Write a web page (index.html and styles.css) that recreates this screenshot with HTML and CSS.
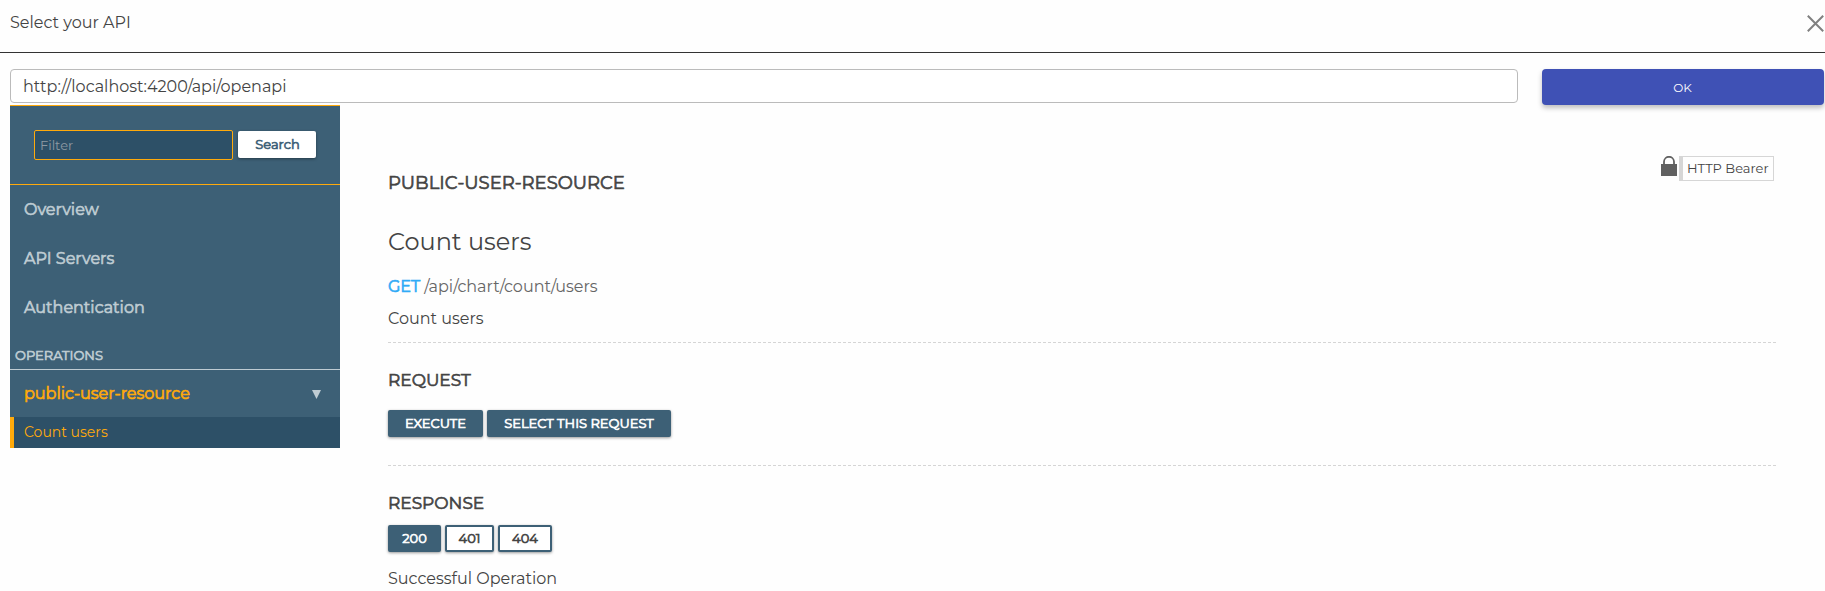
FILE: index.html
```html
<!DOCTYPE html>
<html lang="en">
<head>
<meta charset="utf-8">
<title>Select your API</title>
<link rel="stylesheet" href="styles.css">
</head>
<body>
<header class="dialog-header">
  <span class="t dialog-title">Select your API</span>
  <svg class="close" viewBox="0 0 17 17"><path d="M.8.8l15.4 15.4M16.2.8L.8 16.2"/></svg>
</header>
<div class="url-row">
  <div class="url-input"><span class="t url-text">http://localhost:4200/api/openapi</span></div>
  <button class="ok"><span class="t ok-text">OK</span></button>
</div>
<div class="body">
  <nav class="sidebar">
    <div class="search-row">
      <div class="filter"><span class="t filter-text">Filter</span></div>
      <button class="search"><span class="t strong">Search</span></button>
    </div>
    <div class="nav-item"><span class="t strong">Overview</span></div>
    <div class="nav-item"><span class="t strong">API Servers</span></div>
    <div class="nav-item"><span class="t strong">Authentication</span></div>
    <div class="nav-section"><span class="t strong">OPERATIONS</span></div>
    <div class="nav-group"><span class="t strong">public-user-resource</span><svg class="arrow" viewBox="0 0 9 9"><path d="M0 0h9L4.5 9z"/></svg></div>
    <div class="nav-sub"><span class="t sub-text">Count users</span></div>
  </nav>
  <main class="main">
    <div class="top">
      <h3 class="resource"><span class="t strong">PUBLIC-USER-RESOURCE</span></h3>
      <div class="auth">
        <svg class="lock" viewBox="0 0 16 20"><path class="shackle" d="M3 9V5.8a5 5 0 0 1 10 0V9"/><path d="M0 8h16v12H0z"/></svg>
        <div class="bearer"><span class="t bearer-text">HTTP Bearer</span></div>
      </div>
    </div>
    <h2 class="operation"><span class="t operation-text">Count users</span></h2>
    <div class="endpoint"><span class="t method strong">GET</span><span class="t path">/api/chart/count/users</span></div>
    <div class="summary"><span class="t summary-text">Count users</span></div>
    <section class="request">
      <h4 class="heading"><span class="t strong">REQUEST</span></h4>
      <div class="buttons">
        <button class="btn execute"><span class="t strong">EXECUTE</span></button>
        <button class="btn select"><span class="t strong">SELECT THIS REQUEST</span></button>
      </div>
    </section>
    <section class="response">
      <h4 class="heading"><span class="t strong">RESPONSE</span></h4>
      <div class="buttons codes">
        <button class="btn c200"><span class="t strong">200</span></button>
        <button class="btn outline c401"><span class="t strong">401</span></button>
        <button class="btn outline c404"><span class="t strong">404</span></button>
      </div>
      <div class="result"><span class="t result-text">Successful Operation</span></div>
    </section>
  </main>
</div>
</body>
</html>
```
FILE: styles.css
```css
* { box-sizing: border-box; }
body { margin: 0; height: 591px; overflow: hidden; background: #fefefe; color: #444; font: 400 16px/20px Montserrat, Inter, "Open Sans", sans-serif; }
h2, h3, h4 { margin: 0; font: inherit; }
button { font: inherit; border: 0; padding: 0; margin: 0; color: inherit; }
svg { display: block; flex: none; }
.t { white-space: nowrap; }
.strong { -webkit-text-stroke: .65px currentColor; }

.dialog-header { display: flex; justify-content: space-between; align-items: flex-start; height: 53px; padding: 13px 1px 0 10px; border-bottom: 1px solid #333; }
.close { width: 17px; height: 17px; margin-top: 2px; fill: none; stroke: #808080; stroke-width: 2; }

.url-row { display: flex; gap: 24px; padding: 16px 1px 0 10px; }
.url-input { width: 1508px; height: 34px; padding: 7px 12px; border: 1px solid #bbb; border-radius: 4px; background: #fff; }
.ok { width: 282px; height: 36px; padding: 2px 1px 0 0; border-radius: 4px; background: #3f51b5; color: #fff; font-size: 12px; box-shadow: 0 3px 5px rgba(0,0,0,.25); }

.body { display: flex; padding-left: 10px; }
.sidebar { flex: none; width: 330px; height: 343px; background: #3d6076; color: #bfccd3; border-top: 1px solid #ffaa0b; }
.search-row { display: flex; gap: 5px; height: 79px; padding: 24px 24px 0; border-bottom: 1px solid #ffaa0b; }
.filter { width: 199px; height: 30px; padding: 4px 5px; border: 1px solid #ffaa0b; border-radius: 2px; background: #2d5067; color: #8e9aa3; font-size: 13px; }
.search { width: 78px; height: 27px; margin-top: 1px; padding: 0 0 1px 1px; border-radius: 2px; background: #fff; color: #3d6076; font-size: 13px; box-shadow: 0 1px 3px rgba(0,0,0,.4); }
.nav-item { height: 49px; padding: 15px 14px 0; }
.nav-section { height: 38px; padding: 13px 5px 0; border-bottom: 1px solid #bfccd3; font-size: 13px; }
.nav-group { display: flex; justify-content: space-between; height: 47px; padding: 14px 19px 0 14px; color: #ffaa0b; }
.arrow { width: 9px; height: 9px; margin-top: 6px; fill: #bfccd3; }
.nav-sub { height: 31px; padding: 5px 10px; border-left: 4px solid #ffaa0b; background: #2d5067; color: #ffaa0b; font-size: 14px; }

.main { width: 1388px; margin-left: 48px; }
.top { display: flex; justify-content: space-between; height: 111px; padding-top: 51px; }
.resource { padding-top: 17px; font-size: 18px; }
.auth { display: flex; gap: 2px; padding-right: 2px; }
.lock { width: 16px; height: 20px; fill: #606060; }
.shackle { fill: none; stroke: #606060; stroke-width: 1.8; }
.bearer { width: 95px; height: 25px; padding: 1px 4px; border: 1px solid #d6d6d6; border-left-width: 4px; font-size: 13px; }
.operation { height: 61px; padding-top: 14px; font-size: 24px; line-height: 24px; }
.endpoint { display: flex; gap: 4px; height: 32px; color: #666; }
.method { color: #31abf6; }
.summary { height: 33px; }
.request, .response { background: repeating-linear-gradient(90deg, #d5d5d5 0 3px, transparent 3px 5px) top / 100% 1px no-repeat; }
.request { height: 123px; padding-top: 28px; }
.response { padding-top: 28px; }
.heading { height: 40px; font-size: 17px; }
.response .heading { height: 32px; }
.buttons { display: flex; gap: 4px; font-size: 13px; }
.btn { height: 27px; padding-bottom: 1px; border: 2px solid #3d6076; border-radius: 2px; background: #3d6076; color: #fff; line-height: 20px; box-shadow: 0 1px 3px rgba(0,0,0,.4); }
.outline { background: #fff; color: #444; }
.execute { width: 95px; }
.select { width: 184px; }
.c200 { width: 53px; }
.c401 { width: 49px; }
.c404 { width: 54px; }
.result { padding-top: 17px; }
```
